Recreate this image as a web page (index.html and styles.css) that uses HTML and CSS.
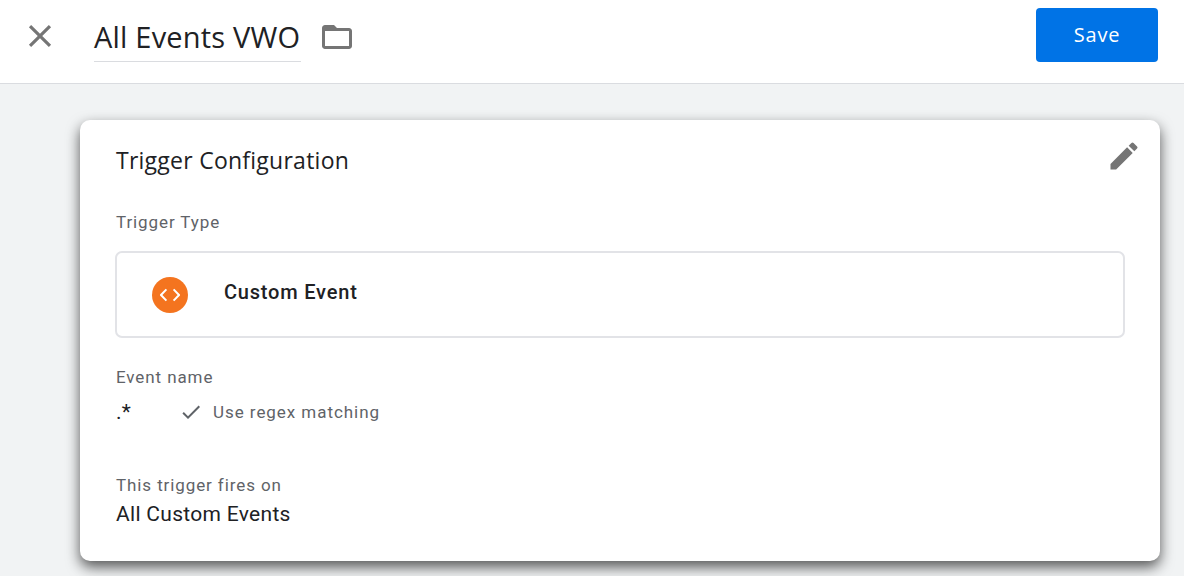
FILE: index.html
```html
<!DOCTYPE html>
<html lang="en">
<head>
  <meta charset="UTF-8">
  <title>All Events VWO</title>
  <link rel="stylesheet" href="styles.css">
</head>
<body>
  <header class="topbar">
    <button class="icon-btn close-btn" aria-label="Close">
      <svg width="38" height="38" viewBox="0 0 24 24"><path d="M19 6.41 17.59 5 12 10.59 6.41 5 5 6.41 10.59 12 5 17.59 6.41 19 12 13.41 17.59 19 19 17.59 13.41 12z"/></svg>
    </button>
    <div class="title-field">All Events VWO</div>
    <button class="icon-btn folder-btn" aria-label="Folder">
      <svg width="36" height="36" viewBox="0 0 24 24"><path d="M20 6h-8l-2-2H4c-1.1 0-1.99.9-1.99 2L2 18c0 1.1.9 2 2 2h16c1.1 0 2-.9 2-2V8c0-1.1-.9-2-2-2zm0 12H4V8h16v10z"/></svg>
    </button>
    <button class="save-btn">Save</button>
  </header>

  <main class="content">
    <section class="card">
      <div class="card-head">
        <h2 class="card-title">Trigger Configuration</h2>
        <button class="icon-btn edit-btn" aria-label="Edit">
          <svg width="36" height="36" viewBox="0 0 24 24"><path d="M3 17.25V21h3.75L17.81 9.94l-3.75-3.75L3 17.25zM20.71 7.04a1 1 0 0 0 0-1.41l-2.34-2.34a1 1 0 0 0-1.41 0l-1.83 1.83 3.75 3.75 1.83-1.83z"/></svg>
        </button>
      </div>

      <div class="label type-label">Trigger Type</div>
      <div class="type-box">
        <span class="type-icon">
          <svg width="20" height="20" viewBox="0 0 20 20"><path d="M6.4 4.4 1 10l5.4 5.6M13.6 4.4 19 10l-5.4 5.6"/></svg>
        </span>
        <span class="type-name">Custom Event</span>
      </div>

      <div class="label name-label">Event name</div>
      <div class="event-row">
        <span class="value">.*</span>
        <svg class="check" width="24" height="24" viewBox="0 0 24 24"><path d="M9 16.17 4.83 12l-1.42 1.41L9 19 21 7l-1.41-1.41z"/></svg>
        <span class="regex-text">Use regex matching</span>
      </div>

      <div class="label fires-label">This trigger fires on</div>
      <div class="value">All Custom Events</div>
    </section>
  </main>
</body>
</html>
```

FILE: styles.css
```css
html, body {
  height: 100%;
}

body {
  margin: 0;
  background: #f1f3f4;
  color: #202124;
  font-family: Roboto, "Liberation Sans", sans-serif;
  overflow: hidden;
}

button {
  font-family: inherit;
  border: none;
  background: none;
  padding: 0;
}

.topbar {
  display: flex;
  align-items: center;
  height: 74px;
  background: #fff;
  border-bottom: 1px solid #dadce0;
  padding: 0 26px 9px 28px;
}

.icon-btn {
  display: flex;
  align-items: center;
  justify-content: center;
}
.icon-btn svg {
  display: block;
  flex-shrink: 0;
  fill: #757575;
}

.close-btn {
  width: 24px;
  height: 24px;
  margin-top: -2px;
}

.title-field {
  margin-left: 42px;
  width: 207px;
  height: 49px;
  line-height: 49px;
  border-bottom: 1px solid #dadce0;
  font-family: "Open Sans", sans-serif;
  font-size: 29px;
  letter-spacing: 0.2px;
  white-space: nowrap;
  color: #202124;
}

.folder-btn {
  margin-left: 18px;
  width: 36px;
  height: 36px;
}

.save-btn {
  margin-left: auto;
  margin-top: -4px;
  padding-bottom: 1px;
  width: 122px;
  height: 54px;
  background: #0073e6;
  color: #fff;
  border-radius: 4px;
  font-family: "Open Sans", sans-serif;
  font-size: 20px;
  font-weight: 500;
  letter-spacing: 0.8px;
}

.content {
  padding: 36px 24px 0 80px;
}

.card {
  box-sizing: border-box;
  height: 441px;
  padding: 24px 36px;
  background: #fff;
  border-radius: 10px;
  box-shadow: 0 6px 14px rgba(0, 0, 0, 0.65);
}

.card-head {
  display: flex;
  justify-content: space-between;
  height: 34px;
}

.card-title {
  margin: -1px 0 0;
  font-family: "Open Sans", sans-serif;
  font-weight: 400;
  font-size: 23px;
  line-height: 34px;
  letter-spacing: 0.25px;
  color: #202124;
}

.edit-btn {
  margin-right: -18px;
  margin-top: -6px;
  width: 36px;
  height: 36px;
}

.label {
  font-size: 17px;
  line-height: 20px;
  letter-spacing: 0.9px;
  color: #5f6368;
}
.type-label {
  margin-top: 34px;
}
.name-label {
  margin-top: 29px;
}
.fires-label {
  margin-top: 50px;
}

.type-box {
  display: flex;
  align-items: center;
  box-sizing: border-box;
  height: 87px;
  margin: 19px -1px 0;
  padding-left: 35px;
  border: 2px solid #e2e3e7;
  border-radius: 7px;
}

.type-icon {
  display: flex;
  align-items: center;
  justify-content: center;
  width: 36px;
  height: 36px;
  border-radius: 50%;
  background: #f4741f;
}
.type-icon svg {
  fill: none;
  stroke: #fff;
  stroke-width: 2;
}

.type-name {
  margin-left: 36px;
  margin-top: -6px;
  font-size: 20px;
  font-weight: 500;
  letter-spacing: 0.8px;
  color: #202124;
}

.event-row {
  display: flex;
  align-items: center;
  height: 26px;
  margin-top: 12px;
}
.check {
  margin-left: 47px;
  fill: #5f6368;
}
.regex-text {
  margin-left: 10px;
  font-size: 17px;
  letter-spacing: 0.95px;
  color: #5f6368;
}

.value {
  font-size: 21px;
  line-height: 26px;
  letter-spacing: 0.3px;
  color: #202124;
}
.event-row .value {
  width: 16px;
}
.fires-label + .value {
  margin-top: 6px;
}
```
